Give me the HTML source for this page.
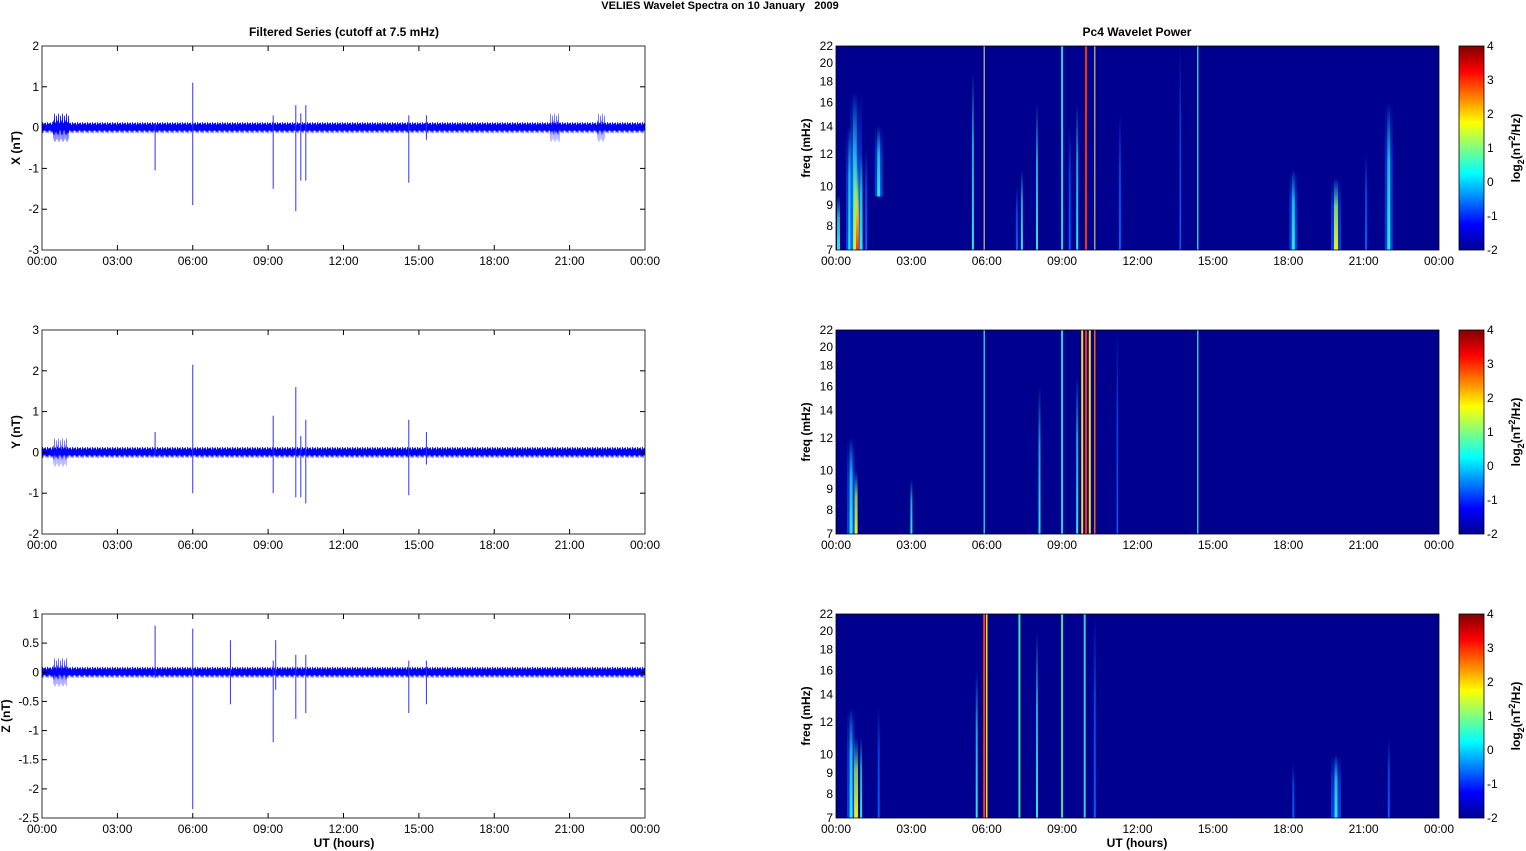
<!DOCTYPE html>
<html><head><meta charset="utf-8">
<style>
html,body{margin:0;padding:0;background:#fff;width:1526px;height:851px;overflow:hidden}
svg{display:block;font-family:"Liberation Sans",Arial,sans-serif}
.t{font-size:12px;fill:#000}
.b{font-size:12px;font-weight:bold;fill:#000}
.m{text-anchor:middle}
.e{text-anchor:end}
.k{stroke:#000;stroke-width:1}
.sp{stroke:#3030ff;stroke-width:1}
</style></head>
<body>
<svg width="1526" height="851" viewBox="0 0 1526 851" xmlns="http://www.w3.org/2000/svg">
<defs>
<linearGradient id="jet" x1="0" y1="1" x2="0" y2="0">
<stop offset="0" stop-color="#00008f"/><stop offset="0.125" stop-color="#0000ff"/>
<stop offset="0.375" stop-color="#00ffff"/><stop offset="0.625" stop-color="#ffff00"/>
<stop offset="0.875" stop-color="#ff0000"/><stop offset="1" stop-color="#800000"/>
</linearGradient>
<linearGradient id="gb" x1="0" y1="1" x2="0" y2="0"><stop offset="0" stop-color="#0060ff"/><stop offset="0.6" stop-color="#0060ff" stop-opacity="0.7"/><stop offset="1" stop-color="#0060ff" stop-opacity="0"/></linearGradient>
<linearGradient id="gc" x1="0" y1="1" x2="0" y2="0"><stop offset="0" stop-color="#30e8f0"/><stop offset="0.6" stop-color="#30e8f0" stop-opacity="0.7"/><stop offset="1" stop-color="#30e8f0" stop-opacity="0"/></linearGradient>
<linearGradient id="gy" x1="0" y1="1" x2="0" y2="0"><stop offset="0" stop-color="#f0f020"/><stop offset="0.6" stop-color="#a0f060" stop-opacity="0.8"/><stop offset="1" stop-color="#30e8f0" stop-opacity="0"/></linearGradient>
<linearGradient id="gr" x1="0" y1="1" x2="0" y2="0"><stop offset="0" stop-color="#ff3000"/><stop offset="0.6" stop-color="#ffb000" stop-opacity="0.8"/><stop offset="1" stop-color="#f0f020" stop-opacity="0"/></linearGradient>
<pattern id="nzA" patternUnits="userSpaceOnUse" x="0" y="75.6" width="5" height="12">
<rect x="0" y="3" width="5" height="6" fill="#0000ff"/>
<polyline points="0,6 0.5,1 1,11 1.5,3 2,10 2.5,0.5 3,11.5 3.5,2 4,9 4.5,1.5 5,6" fill="none" stroke="#0000ff" stroke-width="0.8"/>
</pattern>
<pattern id="nzB" patternUnits="userSpaceOnUse" x="0" y="116.4" width="5" height="12">
<rect x="0" y="3" width="5" height="6" fill="#0000ff"/>
<polyline points="0,6 0.5,1 1,11 1.5,3 2,10 2.5,0.5 3,11.5 3.5,2 4,9 4.5,1.5 5,6" fill="none" stroke="#0000ff" stroke-width="0.8"/>
</pattern>
<pattern id="nzC" patternUnits="userSpaceOnUse" x="0" y="52.3" width="5" height="12">
<rect x="0" y="3" width="5" height="6" fill="#0000ff"/>
<polyline points="0,6 0.5,1 1,11 1.5,3 2,10 2.5,0.5 3,11.5 3.5,2 4,9 4.5,1.5 5,6" fill="none" stroke="#0000ff" stroke-width="0.8"/>
</pattern>
<pattern id="wA" patternUnits="userSpaceOnUse" x="0" y="66.6" width="4" height="30">
<polyline points="0,15 0.5,3 1,27 1.5,8 2,22 2.5,1 3,29 3.5,10 4,15" fill="none" stroke="#0000ff" stroke-width="0.7"/>
</pattern>
<pattern id="wB" patternUnits="userSpaceOnUse" x="0" y="107.4" width="4" height="30">
<polyline points="0,15 0.5,3 1,27 1.5,8 2,22 2.5,1 3,29 3.5,10 4,15" fill="none" stroke="#0000ff" stroke-width="0.7"/>
</pattern>
<pattern id="wC" patternUnits="userSpaceOnUse" x="0" y="43.3" width="4" height="30">
<polyline points="0,15 0.5,3 1,27 1.5,8 2,22 2.5,1 3,29 3.5,10 4,15" fill="none" stroke="#0000ff" stroke-width="0.7"/>
</pattern>
</defs>
<text x="720" y="9" class="b m" style="font-size:11px">VELIES Wavelet Spectra on 10 January &#160; 2009</text>
<text x="344" y="36" class="b m">Filtered Series (cutoff at 7.5 mHz)</text>
<text x="1137" y="36" class="b m">Pc4 Wavelet Power</text>
<text x="344" y="847" class="b m">UT (hours)</text>
<text x="1137" y="847" class="b m">UT (hours)</text>
<text transform="translate(20,148) rotate(-90)" class="b m">X (nT)</text>
<text transform="translate(20,432) rotate(-90)" class="b m">Y (nT)</text>
<text transform="translate(10,716) rotate(-90)" class="b m">Z (nT)</text>
<text transform="translate(810,148) rotate(-90)" class="b m">freq (mHz)</text>
<text transform="translate(810,432) rotate(-90)" class="b m">freq (mHz)</text>
<text transform="translate(810,716) rotate(-90)" class="b m">freq (mHz)</text>
<text transform="translate(1520,148) rotate(-90)" class="b m">log<tspan dy="4" font-size="9">2</tspan><tspan dy="-4">(nT</tspan><tspan dy="-5" font-size="9">2</tspan><tspan dy="5">/Hz)</tspan></text>
<text transform="translate(1520,432) rotate(-90)" class="b m">log<tspan dy="4" font-size="9">2</tspan><tspan dy="-4">(nT</tspan><tspan dy="-5" font-size="9">2</tspan><tspan dy="5">/Hz)</tspan></text>
<text transform="translate(1520,716) rotate(-90)" class="b m">log<tspan dy="4" font-size="9">2</tspan><tspan dy="-4">(nT</tspan><tspan dy="-5" font-size="9">2</tspan><tspan dy="5">/Hz)</tspan></text>

<!-- ================= PANEL 1 (top 46) ================= -->
<g transform="translate(0,46)">
 <rect x="42" y="75.6" width="603" height="12" fill="url(#nzA)"/>
 <rect x="53" y="66.6" width="16" height="30" fill="url(#wA)"/>
 <rect x="550" y="66.6" width="10" height="30" fill="url(#wA)" opacity="0.6"/>
 <rect x="597" y="66.6" width="8" height="30" fill="url(#wA)" opacity="0.6"/>
 <line class="sp" x1="155.1" x2="155.1" y1="77.5" y2="124.4"/>
 <line class="sp" x1="192.75" x2="192.75" y1="36.7" y2="159.1"/>
 <line class="sp" x1="273.2" x2="273.2" y1="69.4" y2="142.8"/>
 <line class="sp" x1="295.8" x2="295.8" y1="59.2" y2="165.2"/>
 <line class="sp" x1="300.8" x2="300.8" y1="67.3" y2="134.6"/>
 <line class="sp" x1="305.8" x2="305.8" y1="59.2" y2="134.6"/>
 <line class="sp" x1="408.8" x2="408.8" y1="69.4" y2="136.7"/>
 <line class="sp" x1="426.4" x2="426.4" y1="69.4" y2="93.8"/>
 <rect x="42" y="0" width="603" height="204" fill="none" stroke="#000" stroke-width="0.8"/>
 <g class="k"><line x1="42" x2="47" y1="40.8" y2="40.8"/><line x1="42" x2="47" y1="81.6" y2="81.6"/><line x1="42" x2="47" y1="122.4" y2="122.4"/><line x1="42" x2="47" y1="163.2" y2="163.2"/>
 <line x1="640" x2="645" y1="40.8" y2="40.8"/><line x1="640" x2="645" y1="81.6" y2="81.6"/><line x1="640" x2="645" y1="122.4" y2="122.4"/><line x1="640" x2="645" y1="163.2" y2="163.2"/></g>
 <text x="39" y="4" class="t e">2</text><text x="39" y="44.8" class="t e">1</text><text x="39" y="85.6" class="t e">0</text><text x="39" y="126.4" class="t e">-1</text><text x="39" y="167.2" class="t e">-2</text><text x="39" y="208" class="t e">-3</text>
</g>
<!-- ================= PANEL 2 (top 330) ================= -->
<g transform="translate(0,330)">
 <rect x="42" y="116.4" width="603" height="12" fill="url(#nzB)"/>
 <rect x="53" y="107.4" width="14" height="30" fill="url(#wB)" opacity="0.6"/>
 <line class="sp" x1="155.1" x2="155.1" y1="102" y2="126.5"/>
 <line class="sp" x1="192.75" x2="192.75" y1="34.7" y2="163.2"/>
 <line class="sp" x1="273.2" x2="273.2" y1="85.7" y2="163.2"/>
 <line class="sp" x1="295.8" x2="295.8" y1="57.1" y2="167.3"/>
 <line class="sp" x1="300.8" x2="300.8" y1="106.1" y2="167.3"/>
 <line class="sp" x1="305.8" x2="305.8" y1="89.8" y2="173.4"/>
 <line class="sp" x1="408.8" x2="408.8" y1="89.8" y2="165.2"/>
 <line class="sp" x1="426.4" x2="426.4" y1="102" y2="134.6"/>
 <rect x="42" y="0" width="603" height="204" fill="none" stroke="#000" stroke-width="0.8"/>
 <g class="k"><line x1="42" x2="47" y1="40.8" y2="40.8"/><line x1="42" x2="47" y1="81.6" y2="81.6"/><line x1="42" x2="47" y1="122.4" y2="122.4"/><line x1="42" x2="47" y1="163.2" y2="163.2"/>
 <line x1="640" x2="645" y1="40.8" y2="40.8"/><line x1="640" x2="645" y1="81.6" y2="81.6"/><line x1="640" x2="645" y1="122.4" y2="122.4"/><line x1="640" x2="645" y1="163.2" y2="163.2"/></g>
 <text x="39" y="4" class="t e">3</text><text x="39" y="44.8" class="t e">2</text><text x="39" y="85.6" class="t e">1</text><text x="39" y="126.4" class="t e">0</text><text x="39" y="167.2" class="t e">-1</text><text x="39" y="208" class="t e">-2</text>
</g>
<!-- ================= PANEL 3 (top 614) ================= -->
<g transform="translate(0,614)">
 <rect x="42" y="52.3" width="603" height="12" fill="url(#nzC)"/>
 <rect x="53" y="43.3" width="14" height="30" fill="url(#wC)" opacity="0.7"/>
 <line class="sp" x1="155.1" x2="155.1" y1="11.7" y2="64.1"/>
 <line class="sp" x1="192.75" x2="192.75" y1="14.6" y2="195.3"/>
 <line class="sp" x1="230.4" x2="230.4" y1="26.2" y2="90.3"/>
 <line class="sp" x1="273.2" x2="273.2" y1="46.6" y2="128.2"/>
 <line class="sp" x1="275.7" x2="275.7" y1="26.2" y2="75.8"/>
 <line class="sp" x1="295.8" x2="295.8" y1="40.8" y2="104.9"/>
 <line class="sp" x1="305.8" x2="305.8" y1="40.8" y2="99.1"/>
 <line class="sp" x1="408.8" x2="408.8" y1="46.6" y2="99.1"/>
 <line class="sp" x1="426.4" x2="426.4" y1="46.6" y2="90.3"/>
 <rect x="42" y="0" width="603" height="204" fill="none" stroke="#000" stroke-width="0.8"/>
 <g class="k"><line x1="42" x2="47" y1="29.1" y2="29.1"/><line x1="42" x2="47" y1="58.3" y2="58.3"/><line x1="42" x2="47" y1="87.4" y2="87.4"/><line x1="42" x2="47" y1="116.6" y2="116.6"/><line x1="42" x2="47" y1="145.7" y2="145.7"/><line x1="42" x2="47" y1="174.9" y2="174.9"/>
 <line x1="640" x2="645" y1="29.1" y2="29.1"/><line x1="640" x2="645" y1="58.3" y2="58.3"/><line x1="640" x2="645" y1="87.4" y2="87.4"/><line x1="640" x2="645" y1="116.6" y2="116.6"/><line x1="640" x2="645" y1="145.7" y2="145.7"/><line x1="640" x2="645" y1="174.9" y2="174.9"/></g>
 <text x="39" y="4" class="t e">1</text><text x="39" y="33.1" class="t e">0.5</text><text x="39" y="62.3" class="t e">0</text><text x="39" y="91.4" class="t e">-0.5</text><text x="39" y="120.6" class="t e">-1</text><text x="39" y="149.7" class="t e">-1.5</text><text x="39" y="178.9" class="t e">-2</text><text x="39" y="208" class="t e">-2.5</text>
</g>

<!-- time ticks -->
<g class="k">
 <line x1="117.4" x2="117.4" y1="46" y2="51"/><line x1="192.75" x2="192.75" y1="46" y2="51"/><line x1="268.1" x2="268.1" y1="46" y2="51"/><line x1="343.5" x2="343.5" y1="46" y2="51"/><line x1="418.9" x2="418.9" y1="46" y2="51"/><line x1="494.25" x2="494.25" y1="46" y2="51"/><line x1="569.6" x2="569.6" y1="46" y2="51"/>
 <line x1="117.4" x2="117.4" y1="250" y2="245"/><line x1="192.75" x2="192.75" y1="250" y2="245"/><line x1="268.1" x2="268.1" y1="250" y2="245"/><line x1="343.5" x2="343.5" y1="250" y2="245"/><line x1="418.9" x2="418.9" y1="250" y2="245"/><line x1="494.25" x2="494.25" y1="250" y2="245"/><line x1="569.6" x2="569.6" y1="250" y2="245"/>
 <line x1="117.4" x2="117.4" y1="330" y2="335"/><line x1="192.75" x2="192.75" y1="330" y2="335"/><line x1="268.1" x2="268.1" y1="330" y2="335"/><line x1="343.5" x2="343.5" y1="330" y2="335"/><line x1="418.9" x2="418.9" y1="330" y2="335"/><line x1="494.25" x2="494.25" y1="330" y2="335"/><line x1="569.6" x2="569.6" y1="330" y2="335"/>
 <line x1="117.4" x2="117.4" y1="534" y2="529"/><line x1="192.75" x2="192.75" y1="534" y2="529"/><line x1="268.1" x2="268.1" y1="534" y2="529"/><line x1="343.5" x2="343.5" y1="534" y2="529"/><line x1="418.9" x2="418.9" y1="534" y2="529"/><line x1="494.25" x2="494.25" y1="534" y2="529"/><line x1="569.6" x2="569.6" y1="534" y2="529"/>
 <line x1="117.4" x2="117.4" y1="614" y2="619"/><line x1="192.75" x2="192.75" y1="614" y2="619"/><line x1="268.1" x2="268.1" y1="614" y2="619"/><line x1="343.5" x2="343.5" y1="614" y2="619"/><line x1="418.9" x2="418.9" y1="614" y2="619"/><line x1="494.25" x2="494.25" y1="614" y2="619"/><line x1="569.6" x2="569.6" y1="614" y2="619"/>
 <line x1="117.4" x2="117.4" y1="818" y2="813"/><line x1="192.75" x2="192.75" y1="818" y2="813"/><line x1="268.1" x2="268.1" y1="818" y2="813"/><line x1="343.5" x2="343.5" y1="818" y2="813"/><line x1="418.9" x2="418.9" y1="818" y2="813"/><line x1="494.25" x2="494.25" y1="818" y2="813"/><line x1="569.6" x2="569.6" y1="818" y2="813"/>
</g>

<!-- ================= SPECTROGRAM 1 ================= -->
<g transform="translate(0,46)">
 <rect x="836" y="0" width="603" height="204" fill="#00008f"/>
 <rect x="837" y="149.6" width="3" height="54.4" fill="url(#gc)"/>
 <rect x="846" y="80.5" width="8" height="123.5" fill="url(#gb)" opacity="0.7"/>
 <rect x="848.3" y="80.5" width="3" height="123.5" fill="url(#gc)"/>
 <rect x="850" y="45.9" width="12" height="158.1" fill="url(#gb)" opacity="0.7"/>
 <rect x="852.8" y="45.9" width="4" height="158.1" fill="url(#gc)"/>
 <rect x="853.6" y="108" width="5" height="96" fill="url(#gy)"/>
 <rect x="855.9" y="149.6" width="3" height="54.4" fill="url(#gr)"/>
 <rect x="859.6" y="108" width="3" height="96" fill="url(#gc)"/>
 <rect x="865.2" y="100.7" width="2" height="103.3" fill="url(#gb)"/>
 <rect x="874.7" y="80.5" width="8" height="70" fill="url(#gb)" opacity="0.7"/>
 <rect x="877.2" y="80.5" width="3" height="70" fill="url(#gc)"/>
 <rect x="971.9" y="26.1" width="2" height="177.9" fill="url(#gc)"/>
 <rect x="983.5" y="0" width="1.5" height="204" fill="#a0a080"/>
 <rect x="1015.9" y="140.5" width="2" height="63.5" fill="url(#gb)"/>
 <rect x="1020.9" y="123.5" width="2" height="80.5" fill="url(#gc)"/>
 <rect x="1036" y="56.7" width="2" height="147.3" fill="url(#gc)"/>
 <rect x="1061.1" y="0" width="2" height="204" fill="#30d0e0"/>
 <rect x="1068.7" y="80.5" width="2" height="123.5" fill="url(#gb)"/>
 <rect x="1076.2" y="56.7" width="2" height="147.3" fill="url(#gc)"/>
 <rect x="1085" y="0" width="2" height="204" fill="#ff3000"/>
 <rect x="1094" y="0" width="1.5" height="204" fill="#a0a080"/>
 <rect x="1118.9" y="68.2" width="2" height="135.8" fill="url(#gb)"/>
 <rect x="1179.5" y="0" width="1.5" height="204" fill="url(#gb)"/>
 <rect x="1197" y="0" width="1.5" height="204" fill="#30c0d0"/>
 <rect x="1289.3" y="123.5" width="8" height="80.5" fill="url(#gb)" opacity="0.7"/>
 <rect x="1291.8" y="123.5" width="3" height="80.5" fill="url(#gc)"/>
 <rect x="1331" y="131.8" width="10" height="72.2" fill="url(#gb)" opacity="0.7"/>
 <rect x="1334" y="131.8" width="4" height="72.2" fill="url(#gy)"/>
 <rect x="1365.1" y="108" width="2" height="96" fill="url(#gb)"/>
 <rect x="1384.8" y="56.7" width="8" height="147.3" fill="url(#gb)" opacity="0.7"/>
 <rect x="1387.3" y="56.7" width="3" height="147.3" fill="url(#gc)"/>
</g>
<!-- ================= SPECTROGRAM 2 ================= -->
<g transform="translate(0,330)">
 <rect x="836" y="0" width="603" height="204" fill="#00008f"/>
 <rect x="847" y="108" width="8" height="96" fill="url(#gb)" opacity="0.7"/>
 <rect x="849.6" y="108" width="3" height="96" fill="url(#gc)"/>
 <rect x="854.6" y="140.5" width="3" height="63.5" fill="url(#gy)"/>
 <rect x="910.4" y="149.6" width="2" height="54.4" fill="url(#gc)"/>
 <rect x="983.5" y="0" width="1.5" height="204" fill="#30c0d0"/>
 <rect x="1038.5" y="56.7" width="2" height="147.3" fill="url(#gc)"/>
 <rect x="1061.1" y="0" width="2" height="204" fill="#30d0e0"/>
 <rect x="1076.2" y="45.9" width="2" height="158.1" fill="url(#gc)"/>
 <rect x="1081.2" y="0" width="2" height="204" fill="#f0e020"/>
 <rect x="1085" y="0" width="2" height="204" fill="#ff3000"/>
 <rect x="1088.8" y="0" width="2" height="204" fill="#f0e020"/>
 <rect x="1094" y="0" width="1.5" height="204" fill="#ff6000"/>
 <rect x="1116.6" y="0" width="1.5" height="204" fill="url(#gb)"/>
 <rect x="1197" y="0" width="1.5" height="204" fill="#30c0d0"/>
</g>
<!-- ================= SPECTROGRAM 3 ================= -->
<g transform="translate(0,614)">
 <rect x="836" y="0" width="603" height="204" fill="#00008f"/>
 <rect x="847" y="93.7" width="8" height="110.3" fill="url(#gb)" opacity="0.7"/>
 <rect x="849.6" y="93.7" width="3" height="110.3" fill="url(#gc)"/>
 <rect x="854.1" y="123.5" width="4" height="80.5" fill="url(#gy)"/>
 <rect x="860.1" y="123.5" width="2" height="80.5" fill="url(#gc)"/>
 <rect x="877.7" y="93.7" width="2" height="110.3" fill="url(#gb)"/>
 <rect x="975.7" y="56.7" width="2" height="147.3" fill="url(#gc)"/>
 <rect x="983.2" y="0" width="2" height="204" fill="#ff4000"/>
 <rect x="986" y="0" width="1.5" height="204" fill="#e0e020"/>
 <rect x="1018.4" y="0" width="2" height="204" fill="#50e0a0"/>
 <rect x="1036" y="17" width="2" height="187" fill="url(#gc)"/>
 <rect x="1061.1" y="0" width="2" height="204" fill="#50e0a0"/>
 <rect x="1083.7" y="0" width="2" height="204" fill="#30d0e0"/>
 <rect x="1093.8" y="0" width="2" height="204" fill="url(#gb)"/>
 <rect x="1292.3" y="149.6" width="2" height="54.4" fill="url(#gb)"/>
 <rect x="1331" y="140.5" width="10" height="63.5" fill="url(#gb)" opacity="0.7"/>
 <rect x="1334.5" y="140.5" width="3" height="63.5" fill="url(#gc)"/>
 <rect x="1387.8" y="123.5" width="2" height="80.5" fill="url(#gb)"/>
</g>

<g transform="translate(0,46)">
 <rect x="836" y="0" width="603" height="204" fill="none" stroke="#000" stroke-width="0.8"/>
 <rect x="1459" y="0" width="25" height="204" fill="url(#jet)" stroke="#000" stroke-width="0.8"/>
</g>
<g transform="translate(0,330)">
 <rect x="836" y="0" width="603" height="204" fill="none" stroke="#000" stroke-width="0.8"/>
 <rect x="1459" y="0" width="25" height="204" fill="url(#jet)" stroke="#000" stroke-width="0.8"/>
</g>
<g transform="translate(0,614)">
 <rect x="836" y="0" width="603" height="204" fill="none" stroke="#000" stroke-width="0.8"/>
 <rect x="1459" y="0" width="25" height="204" fill="url(#jet)" stroke="#000" stroke-width="0.8"/>
</g>

<g transform="translate(0,46)">
 <text x="833" y="208" class="t e">7</text><text x="833" y="184.2" class="t e">8</text><text x="833" y="163.2" class="t e">9</text><text x="833" y="144.5" class="t e">10</text><text x="833" y="112" class="t e">12</text><text x="833" y="84.5" class="t e">14</text><text x="833" y="60.7" class="t e">16</text><text x="833" y="39.7" class="t e">18</text><text x="833" y="21" class="t e">20</text><text x="833" y="4" class="t e">22</text>
 <text x="1487" y="4" class="t">4</text><text x="1487" y="38" class="t">3</text><text x="1487" y="72" class="t">2</text><text x="1487" y="106" class="t">1</text><text x="1487" y="140" class="t">0</text><text x="1487" y="174" class="t">-1</text><text x="1487" y="208" class="t">-2</text>
</g>
<g transform="translate(0,330)">
 <text x="833" y="208" class="t e">7</text><text x="833" y="184.2" class="t e">8</text><text x="833" y="163.2" class="t e">9</text><text x="833" y="144.5" class="t e">10</text><text x="833" y="112" class="t e">12</text><text x="833" y="84.5" class="t e">14</text><text x="833" y="60.7" class="t e">16</text><text x="833" y="39.7" class="t e">18</text><text x="833" y="21" class="t e">20</text><text x="833" y="4" class="t e">22</text>
 <text x="1487" y="4" class="t">4</text><text x="1487" y="38" class="t">3</text><text x="1487" y="72" class="t">2</text><text x="1487" y="106" class="t">1</text><text x="1487" y="140" class="t">0</text><text x="1487" y="174" class="t">-1</text><text x="1487" y="208" class="t">-2</text>
</g>
<g transform="translate(0,614)">
 <text x="833" y="208" class="t e">7</text><text x="833" y="184.2" class="t e">8</text><text x="833" y="163.2" class="t e">9</text><text x="833" y="144.5" class="t e">10</text><text x="833" y="112" class="t e">12</text><text x="833" y="84.5" class="t e">14</text><text x="833" y="60.7" class="t e">16</text><text x="833" y="39.7" class="t e">18</text><text x="833" y="21" class="t e">20</text><text x="833" y="4" class="t e">22</text>
 <text x="1487" y="4" class="t">4</text><text x="1487" y="38" class="t">3</text><text x="1487" y="72" class="t">2</text><text x="1487" y="106" class="t">1</text><text x="1487" y="140" class="t">0</text><text x="1487" y="174" class="t">-1</text><text x="1487" y="208" class="t">-2</text>
</g>

<g transform="translate(0,265)">
 <text x="42" class="t m">00:00</text><text x="117.4" class="t m">03:00</text><text x="192.75" class="t m">06:00</text><text x="268.1" class="t m">09:00</text><text x="343.5" class="t m">12:00</text><text x="418.9" class="t m">15:00</text><text x="494.25" class="t m">18:00</text><text x="569.6" class="t m">21:00</text><text x="645" class="t m">00:00</text>
 <text x="836" class="t m">00:00</text><text x="911.4" class="t m">03:00</text><text x="986.75" class="t m">06:00</text><text x="1062.1" class="t m">09:00</text><text x="1137.5" class="t m">12:00</text><text x="1212.9" class="t m">15:00</text><text x="1288.25" class="t m">18:00</text><text x="1363.6" class="t m">21:00</text><text x="1439" class="t m">00:00</text>
</g>
<g transform="translate(0,549)">
 <text x="42" class="t m">00:00</text><text x="117.4" class="t m">03:00</text><text x="192.75" class="t m">06:00</text><text x="268.1" class="t m">09:00</text><text x="343.5" class="t m">12:00</text><text x="418.9" class="t m">15:00</text><text x="494.25" class="t m">18:00</text><text x="569.6" class="t m">21:00</text><text x="645" class="t m">00:00</text>
 <text x="836" class="t m">00:00</text><text x="911.4" class="t m">03:00</text><text x="986.75" class="t m">06:00</text><text x="1062.1" class="t m">09:00</text><text x="1137.5" class="t m">12:00</text><text x="1212.9" class="t m">15:00</text><text x="1288.25" class="t m">18:00</text><text x="1363.6" class="t m">21:00</text><text x="1439" class="t m">00:00</text>
</g>
<g transform="translate(0,833)">
 <text x="42" class="t m">00:00</text><text x="117.4" class="t m">03:00</text><text x="192.75" class="t m">06:00</text><text x="268.1" class="t m">09:00</text><text x="343.5" class="t m">12:00</text><text x="418.9" class="t m">15:00</text><text x="494.25" class="t m">18:00</text><text x="569.6" class="t m">21:00</text><text x="645" class="t m">00:00</text>
 <text x="836" class="t m">00:00</text><text x="911.4" class="t m">03:00</text><text x="986.75" class="t m">06:00</text><text x="1062.1" class="t m">09:00</text><text x="1137.5" class="t m">12:00</text><text x="1212.9" class="t m">15:00</text><text x="1288.25" class="t m">18:00</text><text x="1363.6" class="t m">21:00</text><text x="1439" class="t m">00:00</text>
</g>
</svg>
</body></html>
